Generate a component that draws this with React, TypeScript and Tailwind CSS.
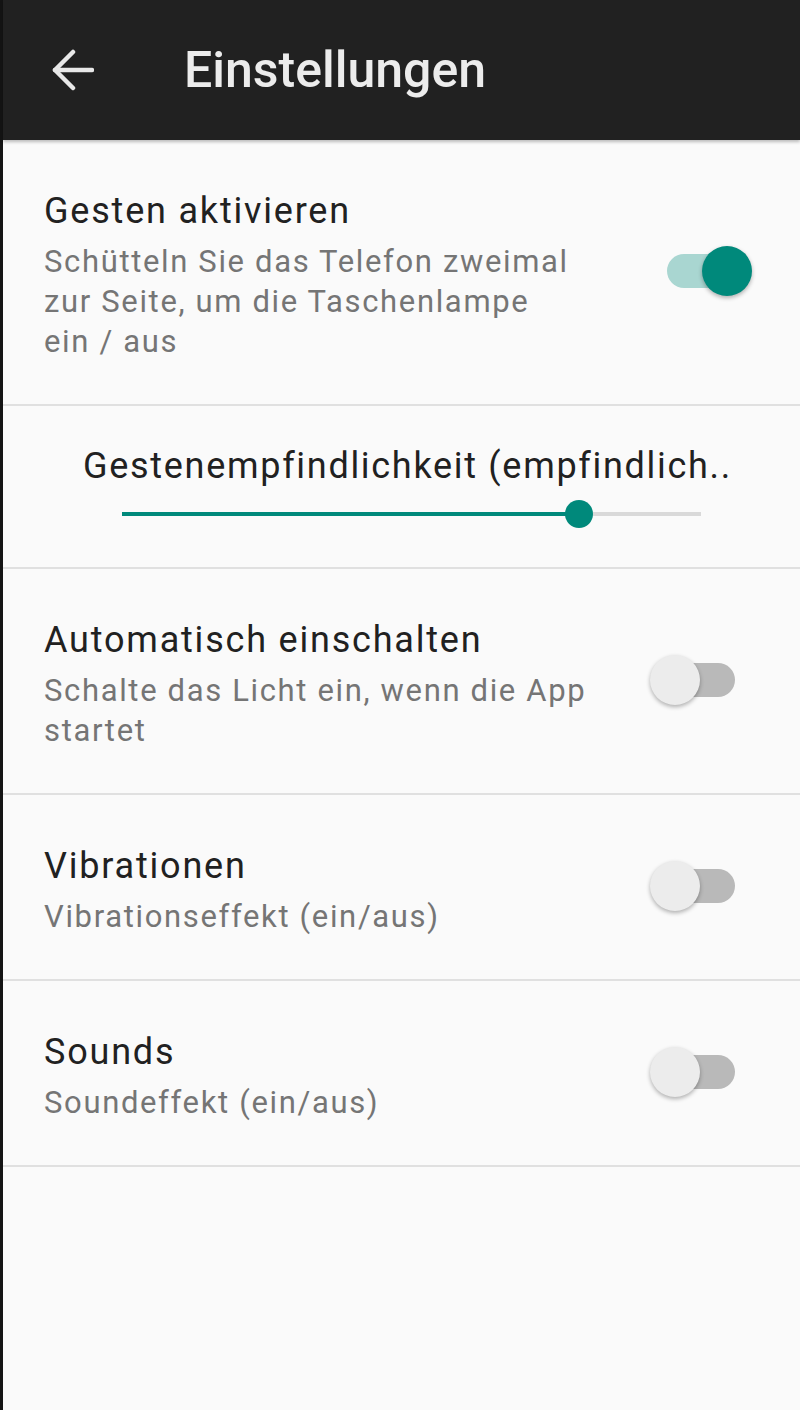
import React from "react";

function Toggle({ on }: { on: boolean }) {
  return (
    <div className={`relative mb-[10px] w-[68px] h-[34px] rounded-full shrink-0 ${on ? "bg-[#a9d6d1]" : "bg-[#b9b9b9]"}`}>
      {on ? (
        <div className="absolute top-[-8px] left-[35px] w-[50px] h-[50px] rounded-full bg-[#00897b] shadow-[0_2px_4px_rgba(0,0,0,0.3)]" />
      ) : (
        <div className="absolute top-[-8px] left-[-17px] w-[50px] h-[50px] rounded-full bg-[#ececec] shadow-[0_2px_4px_rgba(0,0,0,0.3)]" />
      )}
    </div>
  );
}

function Row({ title, lines, on }: { title: string; lines: string[]; on: boolean }) {
  return (
    <div className="flex items-center justify-between border-b-2 border-[#e0e0e0] pt-[50px] pb-[42px] pl-[41px] pr-[65px]">
      <div className="flex flex-col">
        <div className="text-[36px] tracking-[1.8px] leading-[42px] text-[#212121] whitespace-nowrap">{title}</div>
        <div className="mt-[10px] text-[31px] tracking-[1.65px] leading-[40px] text-[#757575] whitespace-nowrap">
          {lines.map((l, i) => (
            <div key={i}>{l}</div>
          ))}
        </div>
      </div>
      <Toggle on={on} />
    </div>
  );
}

export default function App() {
  return (
    <div
      className="w-[800px] min-h-[1410px] bg-[#fafafa] border-l-[3px] border-[#141414] flex flex-col"
      style={{ fontFamily: "Roboto, 'Noto Sans', sans-serif" }}
    >
      <div className="relative z-10 h-[140px] bg-[#212121] flex items-center pl-[49px] shadow-[0_2px_3px_rgba(0,0,0,0.25)]">
        <svg width="42" height="42" viewBox="0 0 42 42" fill="none" stroke="#e8e8e8" strokeWidth="4.5" strokeLinecap="round" strokeLinejoin="round">
          <path d="M40 21H3" />
          <path d="M21 3L3 21L21 39" />
        </svg>
        <div className="ml-[90px] text-[50px] font-medium leading-none text-[#ececec] whitespace-nowrap">Einstellungen</div>
      </div>

      <Row
        title="Gesten aktivieren"
        lines={["Schütteln Sie das Telefon zweimal", "zur Seite, um die Taschenlampe", "ein / aus"]}
        on={true}
      />

      <div className="flex flex-col items-center border-b-2 border-[#e0e0e0] pt-[39px] pb-[39px]">
        <div className="ml-[12px] text-[36px] tracking-[1.7px] leading-[42px] text-[#212121] whitespace-nowrap">Gestenempfindlichkeit (empfindlich..</div>
        <div className="mt-[13px] relative w-[579px] h-[28px] ml-[20px] flex items-center">
          <div className="h-[4px] w-[457px] bg-[#00897b]" />
          <div className="h-[4px] flex-1 bg-[#d9d9d9]" />
          <div className="absolute left-[443px] top-0 w-[28px] h-[28px] rounded-full bg-[#00897b]" />
        </div>
      </div>

      <Row
        title="Automatisch einschalten"
        lines={["Schalte das Licht ein, wenn die App", "startet"]}
        on={false}
      />
      <Row title="Vibrationen" lines={["Vibrationseffekt (ein/aus)"]} on={false} />
      <Row title="Sounds" lines={["Soundeffekt (ein/aus)"]} on={false} />
    </div>
  );
}
